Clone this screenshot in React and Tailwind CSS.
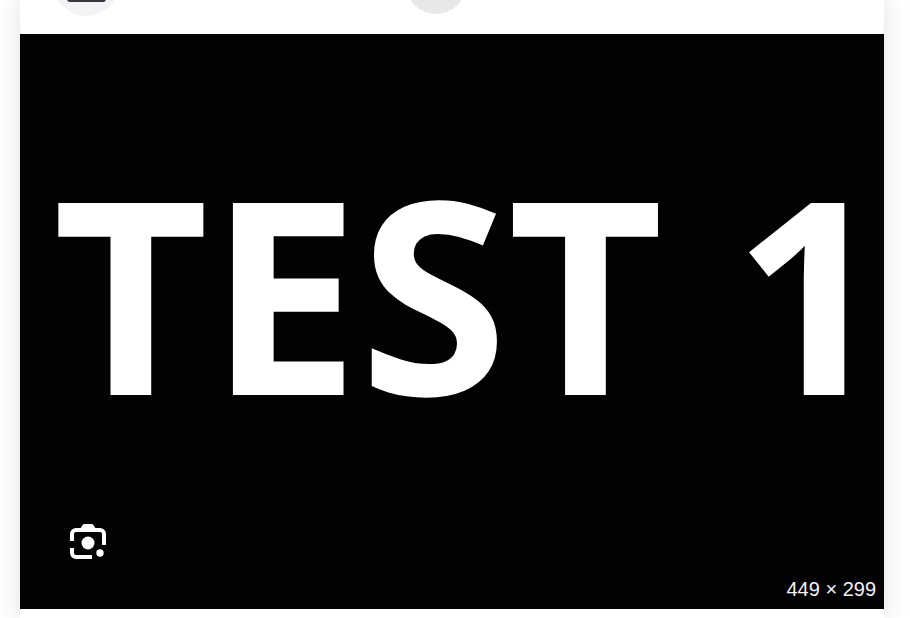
import React from "react";

function LensIcon() {
  return (
    <svg width="38" height="38" viewBox="0 0 38 38" fill="none">
      <path d="M3 18V11A4 4 0 0 1 7 7H31A4 4 0 0 1 35 11V22" stroke="white" strokeWidth="4" />
      <path d="M11 6L14 1.6Q14.6 1 15.4 1H22.6Q23.4 1 24 1.6L27 6Z" fill="white" />
      <path d="M3 25V30A4 4 0 0 0 7 34H23" stroke="white" strokeWidth="4" />
      <circle cx="19" cy="20" r="6.5" fill="white" />
      <circle cx="31" cy="30" r="3.7" fill="white" />
    </svg>
  );
}

export default function App() {
  return (
    <div className="h-[618px] w-[910px] overflow-hidden bg-white pl-[20px] pr-[26px]" style={{ fontFamily: '"Liberation Sans", Arial, sans-serif' }}>
      <div className="h-[618px] bg-white shadow-[0_0_22px_rgba(60,50,80,0.16)]">
        <div className="flex h-[34px] items-start overflow-hidden bg-white">
          <div className="ml-[33px] -mt-[50px] flex h-[66px] w-[66px] shrink-0 items-end justify-center rounded-full bg-[#f4f2f5]">
            <div className="mb-[14px] h-[4px] w-[39px] rounded-b-[3px] bg-[#37353a]" />
          </div>
          <div className="ml-[287px] -mt-[46px] h-[60px] w-[60px] shrink-0 rounded-full bg-[#e9e7ea]" />
        </div>
        <div className="relative flex h-[575px] items-center justify-center bg-[#020104]">
          <span className="ml-[36px] -mt-[62px] whitespace-nowrap text-[269px] leading-none font-bold text-white" style={{ fontFamily: '"Open Sans", sans-serif' }}>
            TEST 1
          </span>
          <div className="absolute left-[49px] bottom-[48px]">
            <LensIcon />
          </div>
          <span className="absolute right-[8px] bottom-[10px] text-[20px] leading-none text-[#f2f2f2]">449 × 299</span>
        </div>
      </div>
    </div>
  );
}
